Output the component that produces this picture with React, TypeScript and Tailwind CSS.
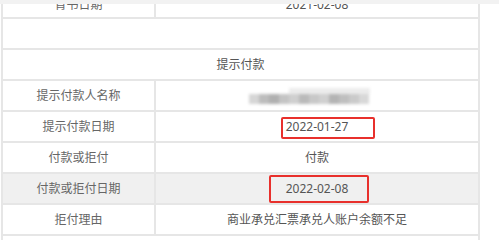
import React from "react";

const font = { fontFamily: '"Noto Sans", "Noto Sans CJK SC", sans-serif' };

function Row({
  label,
  children,
  gray,
}: {
  label: string;
  children?: React.ReactNode;
  gray?: boolean;
}) {
  return (
    <div className={`flex h-[31px] border-b-2 border-[#e6e6e6] ${gray ? "bg-[#f0f0f0]" : "bg-white"}`}>
      <div className="w-[153px] shrink-0 border-r-2 border-[#e6e6e6] flex items-center justify-center text-[#666]">
        {label}
      </div>
      <div className="relative flex-1 flex items-center justify-center text-[#555]">{children}</div>
    </div>
  );
}

function Mosaic() {
  const shades = ["#d6d6d6", "#bdbdbd", "#b0b0b0", "#c4c4c4", "#cfcfcf", "#bababa", "#c8c8c8", "#d0d0d0", "#b4b4b4", "#bfbfbf", "#cacaca", "#d8d8d8"];
  return (
    <div className="flex flex-col -ml-[16px] blur-[1.5px]">
      <div className="flex h-[6px] ml-[40px]">
        {shades.slice(0, 9).map((_, i) => (
          <div key={i} className="w-[9px] h-full bg-[#ececec]" />
        ))}
      </div>
      <div className="flex h-[10px]">
        {shades.map((c, i) => (
          <div key={i} className="w-[10px] h-full" style={{ background: c }} />
        ))}
      </div>
    </div>
  );
}

export default function App() {
  return (
    <div className="w-[499px] h-[240px] bg-white text-[12px] overflow-hidden" style={font}>
      <div className="h-[4px] bg-[#f2f2f2]" />
      <div className="h-[236px] overflow-hidden">
        <div className="ml-[1px] w-[479px] border-x-2 border-[#e6e6e6] -mt-[16px]">
          <div className="flex h-[31px] border-b-2 border-[#e6e6e6]">
            <div className="w-[153px] shrink-0 border-r-2 border-[#e6e6e6] flex items-center justify-center pt-[4px] text-[#666]">
              背书日期
            </div>
            <div className="flex-1 flex items-center justify-center pt-[4px] text-[#555]">2021-02-08</div>
          </div>
          <div className="h-[31px] border-b-2 border-[#e6e6e6]" />
          <div className="h-[31px] border-b-2 border-[#e6e6e6] flex items-center justify-center text-[#555]">
            提示付款
          </div>
          <Row label="提示付款人名称">
            <Mosaic />
          </Row>
          <Row label="提示付款日期">
            2022-01-27
            <div className="absolute left-[125px] top-[5px] w-[94px] h-[22px] border-2 border-[#e8302c] rounded-[2px]" />
          </Row>
          <Row label="付款或拒付">付款</Row>
          <Row label="付款或拒付日期" gray>
            2022-02-08
            <div className="absolute left-[113px] top-[1px] w-[100px] h-[28px] border-2 border-[#e8302c] rounded-[2px]" />
          </Row>
          <Row label="拒付理由">商业承兑汇票承兑人账户余额不足</Row>
          <div className="h-[31px] border-b-2 border-[#e6e6e6]" />
        </div>
      </div>
    </div>
  );
}
